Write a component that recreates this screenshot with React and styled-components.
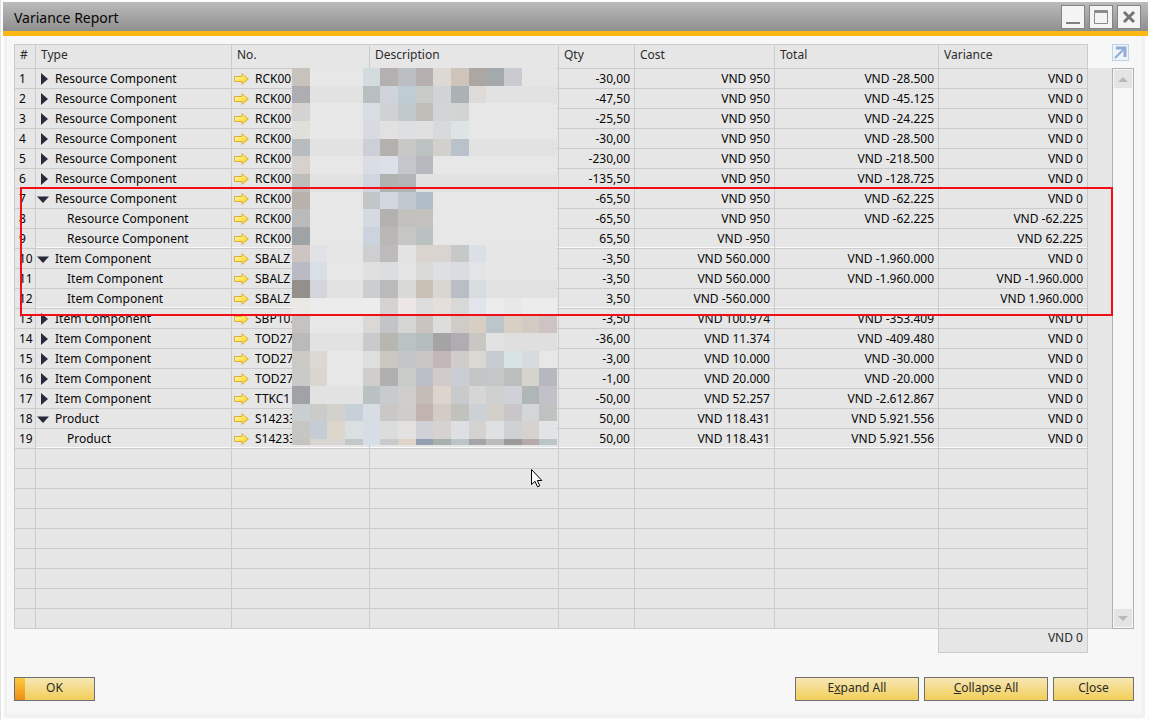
import React from 'react';
import styled, { createGlobalStyle } from 'styled-components';

const ROW_HEIGHT = 20; //px
const EMPTY_ROWS = 9;
const LINE = '#cbcbcb';

const GlobalStyle = createGlobalStyle`
  * {
    box-sizing: border-box;
  }

  body {
    margin: 0;
    background: #fdfdfd;
    color: #060606;
    font: 12px/16px 'Noto Sans', 'Open Sans', sans-serif;
  }
`;

const Window = styled.main`
  display: flex;
  flex-direction: column;
  min-height: 100vh;
  padding: 2px 2px 2px 2px;
  border-left: 1px solid #e2e2e2;
`;

const TitleBar = styled.header`
  display: flex;
  align-items: center;
  justify-content: space-between;
  height: 34px;
  padding: 0 7px 0 11px;
  border-bottom: 5px solid #fdb813;
  background: linear-gradient(#bbbbbb, #8f8f8f);
`;

const Title = styled.h1`
  margin: 0;
  padding-top: 3px;
  font-size: 14px;
  font-weight: 400;
  line-height: 20px;
`;

const WindowButtons = styled.div`
  display: flex;
  gap: 4px;
`;

const WindowButton = styled.button`
  display: flex;
  width: 24px;
  height: 24px;
  padding: 0;
  border: 1px solid #858585;
  background: #f4f4f4;
`;

const Body = styled.section`
  display: flex;
  flex: 1;
  flex-direction: column;
  margin: 0 3px 0 1px;
  padding: 8px 8px 13px 7px;
  border: solid #f1f1f1;
  border-width: 0 3px 4px;
  background: #f7f7f7;
`;

const GridArea = styled.div`
  display: flex;
  align-items: stretch;
  position: relative;
`;

const TableHolder = styled.div`
  flex: 1;
  min-width: 0;
`;

const ReportTable = styled.table`
  width: 100%;
  border-collapse: collapse;
  table-layout: fixed;
`;

const HeadCell = styled.th`
  height: 24px;
  padding: 0 5px 4px;
  border: 1px solid ${LINE};
  background: #e6e6e6;
  color: #2b2b2b;
  font-weight: 400;
  text-align: left;
`;

const Cell = styled.td`
  height: ${ROW_HEIGHT}px;
  padding: 0 4px;
  overflow: hidden;
  border: 1px solid ${LINE};
  background: #e6e6e6;
  box-shadow: ${(props) => (props.$groupEnd ? 'inset 0 -1px #fafafa' : 'none')};
  line-height: 16px;
  text-align: ${(props) => (props.$right ? 'right' : 'left')};
  white-space: nowrap;
`;

const TypeLabel = styled.div`
  display: flex;
  align-items: center;
  gap: 6px;
  padding-left: ${(props) => (props.$child ? 27 : 0)}px;
`;

const Toggle = styled.button`
  display: flex;
  width: 13px;
  height: 12px;
  margin-left: -4px;
  padding: 0;
  border: 0;
  background: none;
`;

const NumberLabel = styled.div`
  display: flex;
  align-items: center;
  gap: 6px;
  margin-left: -3px;
`;

const LinkArrow = styled.a`
  display: flex;
`;

const Gutter = styled.div`
  width: 24px;
  margin-top: 24px;
  border-bottom: 1px solid ${LINE};
  background: #e6e6e6;
`;

const ScrollColumn = styled.div`
  display: flex;
  flex-direction: column;
  width: 22px;
`;

const ExpandButton = styled.button`
  display: flex;
  width: 17px;
  height: 17px;
  margin-bottom: 7px;
  padding: 0;
  border: 1px solid #bcd3ea;
  background: #eef3f8;
`;

const ScrollTrack = styled.div`
  display: flex;
  flex: 1;
  flex-direction: column;
  justify-content: space-between;
  padding: 1px;
  border: 1px solid #b0b0b0;
  background: #f7f7f7;
`;

const ScrollButton = styled.button`
  display: flex;
  align-items: center;
  justify-content: center;
  height: 18px;
  padding: 0;
  border: 0;
  background: #e4e4e4;
`;

const Mosaic = styled.svg`
  position: absolute;
  top: 24px;
  left: 278px;
  width: 265px;
  height: 377px;
`;

const Highlight = styled.div`
  position: absolute;
  top: 143px;
  left: 6px;
  right: 21px;
  height: 129px;
  border: 2px solid #f30d17;
  pointer-events: none;
`;

const Pointer = styled.svg`
  position: absolute;
  top: 424px;
  left: 516px;
`;

const TotalRow = styled.div`
  display: flex;
  justify-content: flex-end;
  padding-right: 46px;
`;

const TotalBox = styled.output`
  width: 150px;
  height: 24px;
  padding: 1px 4px;
  border: 1px solid ${LINE};
  border-top: 0;
  background: #e6e6e6;
  color: #2b2b2b;
  text-align: right;
`;

const Footer = styled.footer`
  display: flex;
  gap: 5px;
  margin-top: auto;
`;

const ActionButton = styled.button`
  width: ${(props) => (props.$wide ? 124 : 81)}px;
  height: 24px;
  margin-right: ${(props) => (props.$primary ? 'auto' : 0)};
  padding: 0 0 2px;
  border: 1px solid #6f6f6f;
  background: ${(props) =>
    props.$primary
      ? 'linear-gradient(#fbcb3c, #ef8d18) left / 10px 100% no-repeat,'
      : ''} linear-gradient(#f6e6b4, #f2cf59);
  color: #2b2b2b;
  font: inherit;
`;

const COLUMNS = [
  { label: '#', width: 21 },
  { label: 'Type', width: 196 },
  { label: 'No.', width: 138 },
  { label: 'Description' },
  { label: 'Qty', width: 76 },
  { label: 'Cost', width: 140 },
  { label: 'Total', width: 164 },
  { label: 'Variance', width: 149 },
];

// state is one of closed, open, child
const ROWS = [
  ['closed', 'Resource Component', 'RCK00', '-30,00', 'VND 950', 'VND -28.500', 'VND 0'],
  ['closed', 'Resource Component', 'RCK00', '-47,50', 'VND 950', 'VND -45.125', 'VND 0'],
  ['closed', 'Resource Component', 'RCK00', '-25,50', 'VND 950', 'VND -24.225', 'VND 0'],
  ['closed', 'Resource Component', 'RCK00', '-30,00', 'VND 950', 'VND -28.500', 'VND 0'],
  ['closed', 'Resource Component', 'RCK00', '-230,00', 'VND 950', 'VND -218.500', 'VND 0'],
  ['closed', 'Resource Component', 'RCK00', '-135,50', 'VND 950', 'VND -128.725', 'VND 0'],
  ['open', 'Resource Component', 'RCK00', '-65,50', 'VND 950', 'VND -62.225', 'VND 0'],
  ['child', 'Resource Component', 'RCK00', '-65,50', 'VND 950', 'VND -62.225', 'VND -62.225'],
  ['child', 'Resource Component', 'RCK00', '65,50', 'VND -950', '', 'VND 62.225'],
  ['open', 'Item Component', 'SBALZ', '-3,50', 'VND 560.000', 'VND -1.960.000', 'VND 0'],
  ['child', 'Item Component', 'SBALZ', '-3,50', 'VND 560.000', 'VND -1.960.000', 'VND -1.960.000'],
  ['child', 'Item Component', 'SBALZ', '3,50', 'VND -560.000', '', 'VND 1.960.000'],
  ['closed', 'Item Component', 'SBP10.', '-3,50', 'VND 100.974', 'VND -353.409', 'VND 0'],
  ['closed', 'Item Component', 'TOD27', '-36,00', 'VND 11.374', 'VND -409.480', 'VND 0'],
  ['closed', 'Item Component', 'TOD27', '-3,00', 'VND 10.000', 'VND -30.000', 'VND 0'],
  ['closed', 'Item Component', 'TOD27', '-1,00', 'VND 20.000', 'VND -20.000', 'VND 0'],
  ['closed', 'Item Component', 'TTKC1', '-50,00', 'VND 52.257', 'VND -2.612.867', 'VND 0'],
  ['open', 'Product', 'S14233', '50,00', 'VND 118.431', 'VND 5.921.556', 'VND 0'],
  ['child', 'Product', 'S14233', '50,00', 'VND 118.431', 'VND 5.921.556', 'VND 0'],
];

const MOSAIC_ROWS = [
  'c8c2bd e7e7e7 e7e7e7 e7e7e7 d2dbde b4b0b0 bbbec3 b5b0af dcd8d4 cfc4ba aca7a3 a4a9ac cacbd1 e6e6e6 e6e6e6',
  'afadb1 e2e2e2 e2e2e2 e2e2e2 b9bec1 ced4d9 bdcdd3 c7cbc7 d2d3d5 abb1b4 dedad7 e2e2e2 e2e2e2 e2e2e2 e2e2e2',
  'd4d3d1 e7e7e7 e7e7e7 e7e7e7 d8dee3 d0d1d2 c1c9cc bfbdb8 d3d4d6 d0d5d1 e7e7e7 e7e7e7 e7e7e7 e7e7e7 e7e7e7',
  'e0dfda e7e7e7 e7e7e7 e7e7e7 d7dbe1 e1e1e1 dddfe1 e0e0e0 d8d9db dee3e3 e7e7e7 e7e7e7 e7e7e7 e7e7e7 e7e7e7',
  'b8bcbf e2e2e2 e2e2e2 e2e2e2 cccfd5 b4b0ad c8c8c6 bbc2c1 d2d0cd b9c2cb e2e2e2 e2e2e2 e2e2e2 e2e2e2 e2e2e2',
  'd7d1ce e7e7e7 e7e7e7 e7e7e7 dadde3 dce0e8 c5c6cb b8b9bf e7e7e7 e7e7e7 e7e7e7 e7e7e7 e7e7e7 e7e7e7 e7e7e7',
  'bfbebb e2e2e2 e2e2e2 e2e2e2 d1d5df b1b2b2 b3b4b6 e2e2e2 e2e2e2 e2e2e2 e2e2e2 e2e2e2 e2e2e2 e2e2e2 e2e2e2',
  'b9b1ac e7e7e7 e7e7e7 e7e7e7 c2c6c8 d2d7e0 c1c9d0 b0bdc7 e7e7e7 e7e7e7 e7e7e7 e7e7e7 e7e7e7 e7e7e7 e7e7e7',
  'bababa e7e7e7 e7e7e7 e7e7e7 d4d9e2 b3b2b0 c3c1bd c3c2be e7e7e7 e7e7e7 e7e7e7 e7e7e7 e7e7e7 e7e7e7 e7e7e7',
  '9fa3a6 e7e7e7 e7e7e7 e7e7e7 cad3de b9b8b6 c6c6c4 bac1c0 e7e7e7 e7e7e7 e7e7e7 e7e7e7 e7e7e7 e7e7e7 e7e7e7',
  'cec4c1 e1e2e5 e6e6e6 e6e6e6 cecfd1 bdbbbc e3e3e3 dad4cf dad4d0 c7c8c8 dae0e5 e6e6e6 e6e6e6 e6e6e6 e6e6e6',
  'b9bac4 d9dfe5 e7e7e7 e7e7e7 e1e0de dbdddf e4e4e4 dadad6 dedfe0 d9dde1 e2e4e5 e6e6e6 e6e6e6 e6e6e6 e6e6e6',
  '958f8c d3d5da e2e2e2 e2e2e2 cccdd0 bababa d9d9d7 c9c1b5 d9d5d1 b9bdc5 d7dcdf e2e2e2 e2e2e2 e2e2e2 e2e2e2',
  'ebe9e5 ececec ececec ececec ececec d4d3d2 ece7e4 dddddd e4dfdb d8d9d7 e1e4ea ececec e8e8e8 ececec ececec',
  'c5c3c2 e7e7e7 e7e7e7 e7e7e7 dbd7d4 c3c4c8 d5d5d4 cac4c0 dddddb cfcbc7 d8cfc4 bcc5c9 d9d0c5 d1cbc4 ccc3c2',
  'bababa e2e2e2 e2e2e2 e2e2e2 c9cacb b7b6b1 bac3c4 b5bdbe a5a3a4 afacb4 c9c7c3 e2e2e2 dfdfdf dfdfdf dfdfdf',
  'cccac5 dcd9d4 e7e7e7 e7e7e7 dcdfde cbc8c3 c2c6c8 c8c7c6 c2b7b6 d1ccc9 dad8d3 c8ccd0 d8e4e3 d5dbde e7e7e7',
  'cacac9 d9d6d2 e7e7e7 e7e7e7 cfcecd b1afb0 c8cdc8 bbbfc6 d0cbc8 cbcdd5 c3c5c6 c4c7c8 bcbebd d5d4cc b5b9be',
  'a0a2a5 e2e2e2 e2e2e2 e2e2e2 b9c1c3 c8cbce cfcecc c3bcb7 ddd4cd c8cacc d5d6d5 cecfcf d0d1d6 afb7b6 c3c1c8',
  'c9ced1 cbcbca d3d1cc c7d0d9 d8dce3 c9c8c7 cfcdcb c1b3b0 d3cbc6 c1c1be cbd1d5 d3d0cb c8c6c8 d3d5d6 c0c2c2',
  'c6c6c2 c5ccd4 ddd7cb dae0e2 d7dde4 dbdddc e2e1df d0d1d7 d5d2cf dedfe2 d4d3d1 dfe0e1 d0d1d2 d6d2d0 e2e3e7',
  'c6c4c0 d8d5d1 d8d6d2 c4c8c8 d6dee6 cac9ca ddd3c7 96a0b0 a8b0ae bac5c8 a4a4a9 bcbcbd 9f9a9a b5aaa9 bac6c6',
];

const HiddenData = () => (
  <Mosaic viewBox="0 0 45 64" preserveAspectRatio="none" shapeRendering="crispEdges" aria-hidden="true">
    {MOSAIC_ROWS.map((row, y) =>
      row.split(' ').map((color, x) => (
        <rect key={`${x}-${y}`} x={x * 3} y={y * 3} width="3" height="3" fill={`#${color}`} />
      ))
    )}
  </Mosaic>
);

const Triangle = ({ open }) => (
  <svg width="13" height="12" viewBox="0 0 13 12" aria-hidden="true">
    <path d={open ? 'M1 3.500h12L7 10z' : 'M5 0v12L12 6z'} fill="#29293d" />
  </svg>
);

const YellowArrow = () => (
  <svg width="16" height="12" viewBox="0 0 16 12" aria-hidden="true">
    <defs>
      <linearGradient id="arrowFill" x1="0" y1="0" x2="1" y2="1">
        <stop offset="0" stopColor="#fffbd0" />
        <stop offset="0.5" stopColor="#ffe95e" />
        <stop offset="1" stopColor="#f3bd25" />
      </linearGradient>
    </defs>
    <path
      d="M1.500 3.500H9V0.700L15.300 6 9 11.300V8.500H1.500z"
      fill="url(#arrowFill)"
      stroke="#dcae38"
      strokeLinejoin="round"
    />
  </svg>
);

const DataRow = ({ row, index, groupEnd }) => {
  const [state, type, no, ...amounts] = row;

  return (
    <tr>
      <Cell>{index}</Cell>
      <Cell $groupEnd={groupEnd}>
        <TypeLabel $child={state === 'child'}>
          {state !== 'child' && (
            <Toggle aria-label={`Toggle row ${index}`} aria-expanded={state === 'open'}>
              <Triangle open={state === 'open'} />
            </Toggle>
          )}
          {type}
        </TypeLabel>
      </Cell>
      <Cell $groupEnd={groupEnd}>
        <NumberLabel>
          <LinkArrow href="#" aria-label={`Open ${no}`}>
            <YellowArrow />
          </LinkArrow>
          {no}
        </NumberLabel>
      </Cell>
      <Cell $groupEnd={groupEnd} />
      {amounts.map((amount, i) => (
        <Cell key={i} $right $groupEnd={groupEnd}>
          {amount}
        </Cell>
      ))}
    </tr>
  );
};

const TheTitleBar = () => (
  <TitleBar>
    <Title>Variance Report</Title>
    <WindowButtons>
      <WindowButton aria-label="Minimize">
        <svg width="22" height="22" viewBox="0 0 22 22">
          <path d="M4 17h14" stroke="#808080" strokeWidth="2" />
        </svg>
      </WindowButton>
      <WindowButton aria-label="Maximize">
        <svg width="22" height="22" viewBox="0 0 22 22" fill="none" stroke="#8a8a8a">
          <path d="M4.500 4.500h13v13h-13z" />
          <path d="M4 6h14" strokeWidth="2" />
        </svg>
      </WindowButton>
      <WindowButton aria-label="Close window">
        <svg width="22" height="22" viewBox="0 0 22 22">
          <path d="M6 6l10 10M16 6L6 16" stroke="#757575" strokeWidth="3" />
        </svg>
      </WindowButton>
    </WindowButtons>
  </TitleBar>
);

const TheScrollbar = () => (
  <ScrollColumn>
    <ExpandButton aria-label="Expand grid">
      <svg width="15" height="15" viewBox="0 0 15 15" fill="none" stroke="#8facd6">
        <path d="M3 3h9v9" strokeWidth="3" />
        <path d="M2 13L11 4" strokeWidth="2" />
      </svg>
    </ExpandButton>
    <ScrollTrack>
      <ScrollButton aria-label="Scroll up">
        <svg width="10" height="5" viewBox="0 0 10 5">
          <path d="M5 0l5 5H0z" fill="#b9b9b9" />
        </svg>
      </ScrollButton>
      <ScrollButton aria-label="Scroll down">
        <svg width="10" height="5" viewBox="0 0 10 5">
          <path d="M0 0h10L5 5z" fill="#b9b9b9" />
        </svg>
      </ScrollButton>
    </ScrollTrack>
  </ScrollColumn>
);

// a child row that is not followed by another child closes its group
const isGroupEnd = (i) => ROWS[i][0] === 'child' && (!ROWS[i + 1] || ROWS[i + 1][0] !== 'child');

export default function App() {
  return (
    <Window>
      <GlobalStyle />
      <TheTitleBar />
      <Body>
        <GridArea>
          <TableHolder>
            <ReportTable>
              <colgroup>
                {COLUMNS.map((column) => (
                  <col key={column.label} width={column.width} />
                ))}
              </colgroup>
              <thead>
                <tr>
                  {COLUMNS.map((column) => (
                    <HeadCell key={column.label}>{column.label}</HeadCell>
                  ))}
                </tr>
              </thead>
              <tbody>
                {ROWS.map((row, i) => (
                  <DataRow key={i} row={row} index={i + 1} groupEnd={isGroupEnd(i)} />
                ))}
                {Array.from({ length: EMPTY_ROWS }, (_, i) => (
                  <tr key={i}>
                    {COLUMNS.map((column) => (
                      <Cell key={column.label} />
                    ))}
                  </tr>
                ))}
              </tbody>
            </ReportTable>
          </TableHolder>
          <Gutter />
          <TheScrollbar />
          <HiddenData />
          <Highlight />
          <Pointer width="13" height="20" viewBox="0 0 13 20" aria-hidden="true">
            <path
              d="M1.500 1.500v15l3.500-3.200 2.500 5.500 2.300-1-2.500-5.300h4.500z"
              fill="#ffffff"
              stroke="#000000"
            />
          </Pointer>
        </GridArea>
        <TotalRow>
          <TotalBox>VND 0</TotalBox>
        </TotalRow>
        <Footer>
          <ActionButton $primary>OK</ActionButton>
          <ActionButton $wide>
            E<u>x</u>pand All
          </ActionButton>
          <ActionButton $wide>
            <u>C</u>ollapse All
          </ActionButton>
          <ActionButton>
            C<u>l</u>ose
          </ActionButton>
        </Footer>
      </Body>
    </Window>
  );
}
